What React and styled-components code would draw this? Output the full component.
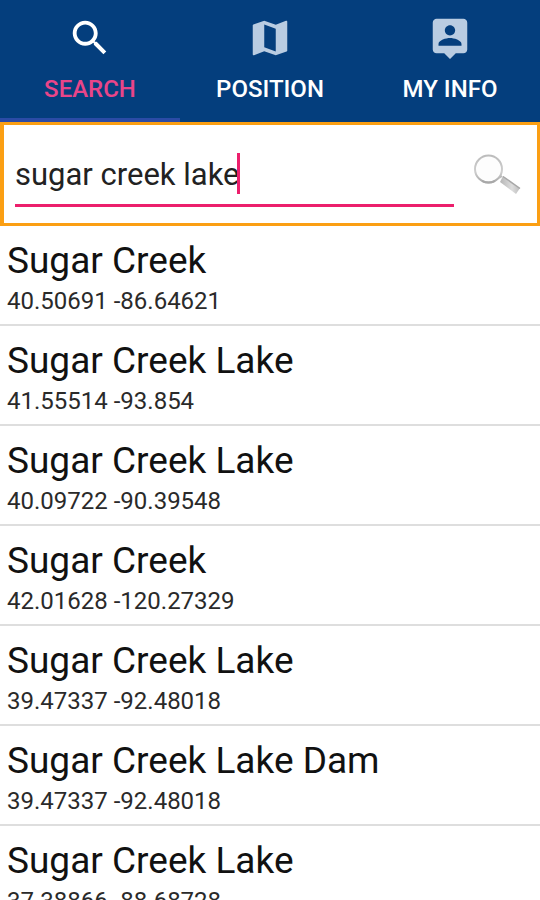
import React, { useState } from "react";
import styled, { createGlobalStyle } from "styled-components";

const GlobalStyle = createGlobalStyle`
  *, *::before, *::after { box-sizing: border-box; }
  html, body, #root { height: 100%; }
  body {
    margin: 0;
    background: #fff;
    color: #111;
    font-family: Roboto, "Liberation Sans", sans-serif;
  }
`;

const Screen = styled.div`
  display: flex;
  flex-direction: column;
  height: 100%;
  overflow: hidden;
`;

const TabBar = styled.nav`
  display: grid;
  grid-template-columns: repeat(3, 1fr);
  flex: none;
  background: #043e7d;
`;

const Tab = styled.button`
  display: flex;
  flex-direction: column;
  align-items: center;
  gap: 14px;
  padding: 15px 0 14px;
  border: 0;
  border-bottom: 4px solid ${(p) => (p.$active ? "#2b4ba6" : "transparent")};
  background: none;
  color: ${(p) => (p.$active ? "#e94589" : "#fff")};
  font: 500 24px/29px Roboto, "Liberation Sans", sans-serif;
  text-transform: uppercase;
  cursor: pointer;
`;

const TabIcon = styled.svg`
  width: 46px;
  height: 46px;
  fill: ${(p) => (p.$active ? "#fff" : "#b9cce2")};
`;

const SearchForm = styled.form`
  display: flex;
  align-items: center;
  flex: none;
  gap: 18px;
  padding: 16px 15px 16px 11px;
  border: 3px solid #fb9f13;
  border-left-width: 4px;
`;

const Field = styled.label`
  display: flex;
  align-items: center;
  flex: 1;
  min-width: 0;
  height: 66px;
  padding-top: 2px;
  border-bottom: 3px solid #ec1f6c;
`;

const FieldInput = styled.input`
  field-sizing: content;
  min-width: 1px;
  max-width: 100%;
  height: 40px;
  padding: 2px 0 0;
  border: 0;
  outline: 0;
  background: none;
  color: #222;
  caret-color: transparent;
  font: 400 31px/38px Roboto, "Liberation Sans", sans-serif;
`;

const Caret = styled.span`
  flex: none;
  width: 3px;
  height: 41px;
  margin-left: -3px;
  background: #ec1f6c;
`;

const SubmitButton = styled.button`
  display: flex;
  flex: none;
  padding: 0;
  border: 0;
  background: none;
  cursor: pointer;
`;

const Results = styled.ul`
  flex: 1;
  min-height: 0;
  margin: 0;
  padding: 0;
  overflow: hidden;
  list-style: none;
`;

const Result = styled.li`
  height: 100px;
  padding: 12px 7px 0;
  border-bottom: 2px solid #dedede;
`;

const Name = styled.div`
  font-size: 37px;
  line-height: 46px;
  white-space: nowrap;
`;

const Coordinates = styled.div`
  color: #2a2a2a;
  font-size: 24px;
  line-height: 34px;
  white-space: nowrap;
`;

const tabs = [
  {
    label: "Search",
    path: "M15.5 14h-.79l-.28-.27C15.41 12.59 16 11.11 16 9.5 16 5.91 13.09 3 9.5 3S3 5.91 3 9.5 5.91 16 9.5 16c1.61 0 3.09-.59 4.23-1.57l.27.28v.79l5 4.99L20.49 19l-4.99-5zm-6 0C7.01 14 5 11.99 5 9.5S7.01 5 9.5 5 14 7.01 14 9.5 11.99 14 9.5 14z",
  },
  {
    label: "Position",
    path: "M20.5 3l-.16.03L15 5.1 9 3 3.36 4.9c-.21.07-.36.25-.36.48V20.5c0 .28.22.5.5.5l.16-.03L9 18.9l6 2.1 5.64-1.9c.21-.07.36-.25.36-.48V3.5c0-.28-.22-.5-.5-.5zM15 19l-6-2.11V5l6 2.11V19z",
  },
  {
    label: "My Info",
    path: "M19 2H5c-1.11 0-2 .9-2 2v14c0 1.1.89 2 2 2h4l3 3 3-3h4c1.1 0 2-.9 2-2V4c0-1.1-.9-2-2-2zm-7 3.3c1.49 0 2.7 1.21 2.7 2.7s-1.21 2.7-2.7 2.7S9.3 9.49 9.3 8s1.21-2.7 2.7-2.7zM18 16H6v-.9c0-2 4-3.1 6-3.1s6 1.1 6 3.1v.9z",
  },
];

const places = [
  { name: "Sugar Creek", coordinates: "40.50691 -86.64621" },
  { name: "Sugar Creek Lake", coordinates: "41.55514 -93.854" },
  { name: "Sugar Creek Lake", coordinates: "40.09722 -90.39548" },
  { name: "Sugar Creek", coordinates: "42.01628 -120.27329" },
  { name: "Sugar Creek Lake", coordinates: "39.47337 -92.48018" },
  { name: "Sugar Creek Lake Dam", coordinates: "39.47337 -92.48018" },
  { name: "Sugar Creek Lake", coordinates: "37.38866 -88.68728" },
];

function Magnifier() {
  return (
    <svg width="50" height="44" viewBox="0 0 50 44" aria-hidden="true">
      <defs>
        <linearGradient id="rim" x1="0" y1="0" x2="0" y2="1">
          <stop offset="0" stopColor="#bcbcbc" />
          <stop offset="0.6" stopColor="#cecece" />
          <stop offset="1" stopColor="#a9a9a9" />
        </linearGradient>
        <linearGradient id="handle" x1="0" y1="0" x2="1" y2="0">
          <stop offset="0" stopColor="#b5b5b5" />
          <stop offset="0.6" stopColor="#dddddd" />
          <stop offset="1" stopColor="#bdbdbd" />
        </linearGradient>
      </defs>
      <circle cx="16.5" cy="17" r="13.5" fill="#fdfdfd" stroke="url(#rim)" strokeWidth="2" />
      <path d="M10 28.8a13.5 13.5 0 0 0 13 0" fill="none" stroke="#a8a8a8" strokeWidth="2" />
      <path d="M27 26l3-2" stroke="#bbb" strokeWidth="2" />
      <path d="M31 24L48 36 44 42 28 30z" fill="url(#handle)" />
      <path d="M31 24.5L48 36.5" stroke="#a8a8a8" strokeWidth="1.5" />
    </svg>
  );
}

export default function App() {
  const [active, setActive] = useState("Search");
  const [query, setQuery] = useState("sugar creek lake");

  return (
    <Screen>
      <GlobalStyle />
      <TabBar>
        {tabs.map(({ label, path }) => (
          <Tab
            key={label}
            type="button"
            $active={label === active}
            aria-current={label === active ? "page" : undefined}
            onClick={() => setActive(label)}
          >
            <TabIcon viewBox="0 0 24 24" $active={label === active} aria-hidden="true">
              <path d={path} />
            </TabIcon>
            {label}
          </Tab>
        ))}
      </TabBar>
      <SearchForm onSubmit={(e) => e.preventDefault()}>
        <Field>
          <FieldInput
            type="text"
            aria-label="Place name"
            value={query}
            onChange={(e) => setQuery(e.target.value)}
          />
          <Caret />
        </Field>
        <SubmitButton type="submit" aria-label="Search places">
          <Magnifier />
        </SubmitButton>
      </SearchForm>
      <Results>
        {places.map(({ name, coordinates }, i) => (
          <Result key={i}>
            <Name>{name}</Name>
            <Coordinates>{coordinates}</Coordinates>
          </Result>
        ))}
      </Results>
    </Screen>
  );
}
